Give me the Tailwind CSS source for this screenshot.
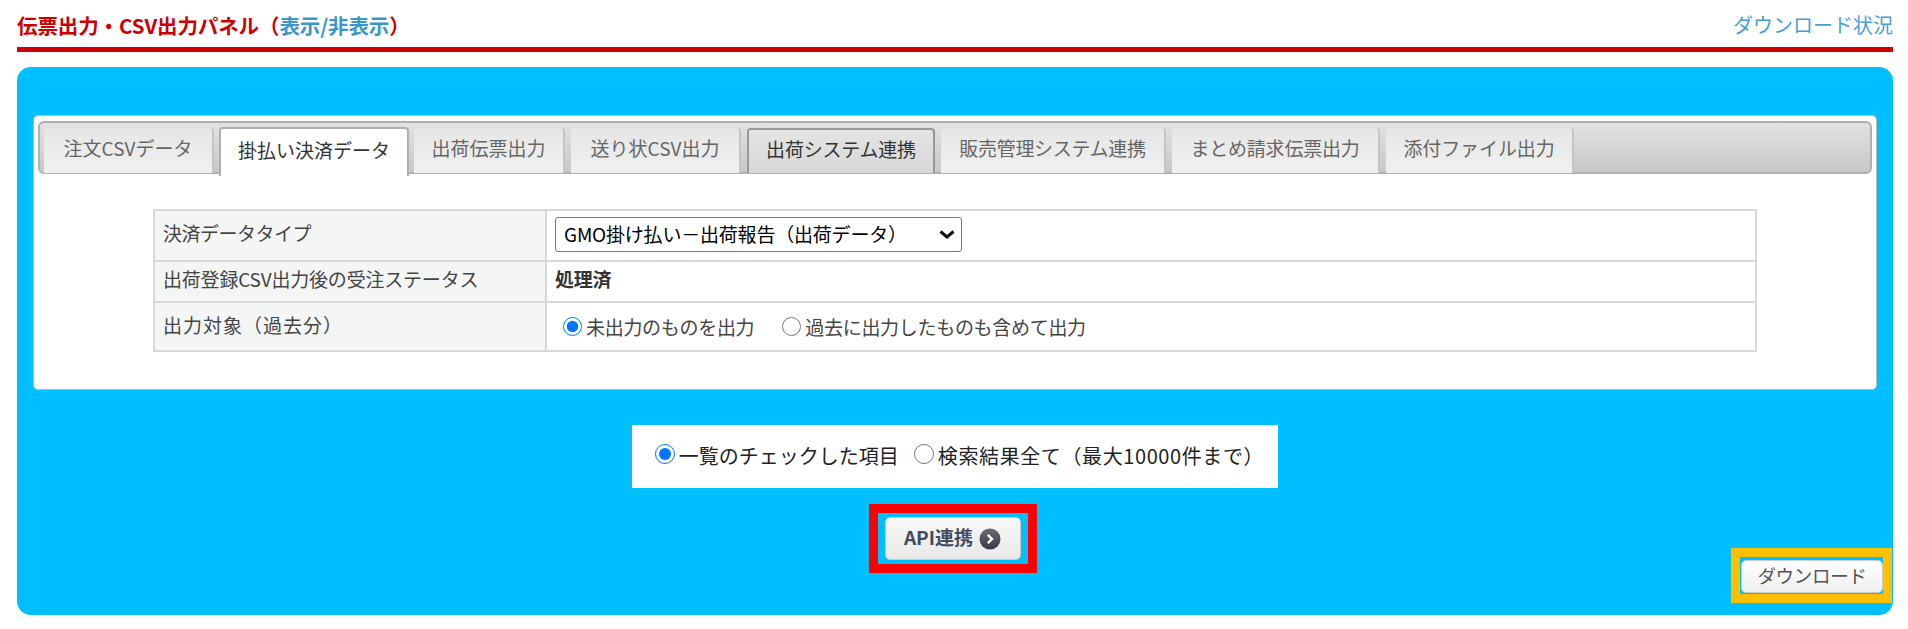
<!DOCTYPE html>
<html lang="ja">
<head>
<meta charset="utf-8">
<script src="https://cdn.jsdelivr.net/npm/@tailwindcss/browser@4"></script>
</head>
<body class="bg-white font-['Noto_Sans_CJK_JP',sans-serif] text-[#444]">
<div class="h-[629px] overflow-hidden pl-[17px] pr-[15px]">
  <div class="flex h-[52px] items-start justify-between border-b-[5px] border-[#cc0000] pt-[12px]">
    <div class="text-[20.5px] leading-[26px] font-bold tracking-[-0.1px] text-[#cc0000]">伝票出力・CSV出力パネル（<span class="text-[#3b97c9]">表示/非表示</span>）</div>
    <div class="text-[20px] leading-[26px] text-[#4a9fd0]">ダウンロード状況</div>
  </div>
  <div class="relative mt-[15px] flex h-[548px] flex-col items-center rounded-[14px] bg-[#00bfff] px-[16px] pt-[48px]">
    <div class="h-[275px] w-full rounded-[5px] border border-[#bbb] bg-white px-[4px] pt-[5px]">
      <div class="flex h-[53px] gap-[6px] rounded-[6px] border-2 border-[#b0b0b0] bg-gradient-to-b from-[#e2e2e2] to-[#c8c8c8] pt-[5px] pl-[4px]">
        <div class="flex h-[45px] w-[170px] items-center justify-center rounded-t-[4px] border-r-2 border-[#c4c4c4] bg-gradient-to-b from-[#e6e6e6] to-[#f0f0f0] pb-[5px] text-[19px] text-[#666]">注文CSVデータ</div>
        <div class="-mx-[1px] -mt-[1px] flex h-[49px] w-[190px] items-center justify-center rounded-t-[4px] border-2 border-b-0 border-[#b0b0b0] bg-white pb-[5px] text-[19px] text-[#333]">掛払い決済データ</div>
        <div class="flex h-[45px] w-[151px] items-center justify-center rounded-t-[4px] border-r-2 border-[#c4c4c4] bg-gradient-to-b from-[#e6e6e6] to-[#f0f0f0] pb-[5px] text-[19px] text-[#666]">出荷伝票出力</div>
        <div class="flex h-[45px] w-[170px] items-center justify-center rounded-t-[4px] border-r-2 border-[#c4c4c4] bg-gradient-to-b from-[#e6e6e6] to-[#f0f0f0] pb-[5px] text-[19px] text-[#666]">送り状CSV出力</div>
        <div class="flex h-[45px] w-[188px] items-center justify-center rounded-t-[4px] border-2 border-b-0 border-[#999] bg-gradient-to-b from-[#e4e4e4] to-[#d8d8d8] pb-[5px] text-[19px] tracking-[-0.2px] text-[#333]">出荷システム連携</div>
        <div class="flex h-[45px] w-[225px] items-center justify-center rounded-t-[4px] border-r-2 border-[#c4c4c4] bg-gradient-to-b from-[#e6e6e6] to-[#f0f0f0] pb-[5px] text-[19px] tracking-[-0.3px] text-[#666]">販売管理システム連携</div>
        <div class="flex h-[45px] w-[208px] items-center justify-center rounded-t-[4px] border-r-2 border-[#c4c4c4] bg-gradient-to-b from-[#e6e6e6] to-[#f0f0f0] pb-[5px] text-[19px] tracking-[-0.2px] text-[#666]">まとめ請求伝票出力</div>
        <div class="flex h-[45px] w-[188px] items-center justify-center rounded-t-[4px] border-r-2 border-[#c4c4c4] bg-gradient-to-b from-[#e6e6e6] to-[#f0f0f0] pb-[5px] text-[19px] tracking-[-0.1px] text-[#666]">添付ファイル出力</div>
      </div>
      <table class="mx-auto mt-[35px] w-[1604px] table-fixed border-collapse text-[19px] tracking-[-0.2px]">
        <tbody>
          <tr class="h-[51px]">
            <td class="w-[392px] border-2 border-[#d8d8d8] bg-[#f4f5f5] pb-[5px] pl-[8px] tracking-[-0.5px]">決済データタイプ</td>
            <td class="border-2 border-[#d8d8d8] pb-[2px] pl-[8px]">
              <div class="relative w-[407px]">
                <select class="block h-[35px] w-full appearance-none rounded-[3px] border border-[#767676] bg-white pl-[8px] text-[19px] tracking-[-0.2px] text-black"><option>GMO掛け払い－出荷報告（出荷データ）</option></select>
                <svg viewBox="0 0 16 9" class="pointer-events-none absolute top-[13px] right-[7px] h-[9px] w-[16px]"><path d="M1.5 1.5 8 7l6.5-5.5" fill="none" stroke="#111" stroke-width="3"/></svg>
              </div>
            </td>
          </tr>
          <tr class="h-[41px]">
            <td class="border-2 border-[#d8d8d8] bg-[#f4f5f5] pb-[5px] pl-[8px]">出荷登録CSV出力後の受注ステータス</td>
            <td class="border-2 border-[#d8d8d8] pb-[5px] pl-[8px] font-bold text-[#333]">処理済</td>
          </tr>
          <tr class="h-[49px]">
            <td class="border-2 border-[#d8d8d8] bg-[#f4f5f5] pb-[2px] pl-[8px] tracking-[1px]">出力対象（過去分）</td>
            <td class="border-2 border-[#d8d8d8] pt-[2px] pl-[16px]">
              <div class="flex items-center tracking-[-0.3px]">
                <input type="radio" name="a" checked class="mr-[4px] mb-[3px] h-[19px] w-[19px]">
                <span class="mr-[28px]">未出力のものを出力</span>
                <input type="radio" name="a" class="mr-[4px] mb-[3px] h-[19px] w-[19px]">
                <span>過去に出力したものも含めて出力</span>
              </div>
            </td>
          </tr>
        </tbody>
      </table>
    </div>
    <div class="mt-[35px] flex h-[63px] w-[646px] items-center justify-center bg-white pl-[9px] text-[20px] text-[#222]">
      <input type="radio" name="b" checked class="mr-[4px] mb-[6px] h-[20px] w-[20px]">
      <span class="mb-[2px] mr-[15px]">一覧のチェックした項目</span>
      <input type="radio" name="b" class="mr-[4px] mb-[6px] h-[20px] w-[20px]">
      <span class="mb-[2px] tracking-[0.6px]">検索結果全て（最大10000件まで）</span>
    </div>
    <div class="mt-[16px] mr-[5px] border-[9px] border-[#ff0000] px-[7px] pt-[4px] pb-[4px]">
      <div class="flex h-[43px] w-[136px] items-center justify-center gap-[6px] rounded-[5px] border border-[#ccc] bg-gradient-to-b from-[#f8f8f8] to-[#e8e8e8] pb-[2px] text-[19px] font-bold text-[#444a60]">
        API連携
        <svg viewBox="0 0 22 22" class="mt-[2px] h-[22px] w-[22px]"><defs><linearGradient id="g" x1="0" y1="0" x2="0" y2="1"><stop offset="0" stop-color="#6a6a78"/><stop offset="1" stop-color="#3a3a44"/></linearGradient></defs><circle cx="11" cy="11" r="10.5" fill="url(#g)"/><path d="M8.8 6.8 13 11l-4.2 4.2" fill="none" stroke="#fff" stroke-width="2.4"/></svg>
      </div>
    </div>
    <div class="absolute top-[481px] right-[1px] h-[55px] w-[161px] border-[9px] border-[#ffc000] px-[1px] pt-[3px]">
      <div class="flex h-[33px] w-[142px] items-center justify-center rounded-[5px] border border-[#ccc] bg-gradient-to-b from-[#ffffff] to-[#efefef] pb-[2px] text-[18.5px] tracking-[-0.3px] text-[#555]">ダウンロード</div>
    </div>
  </div>
</div>
</body>
</html>
